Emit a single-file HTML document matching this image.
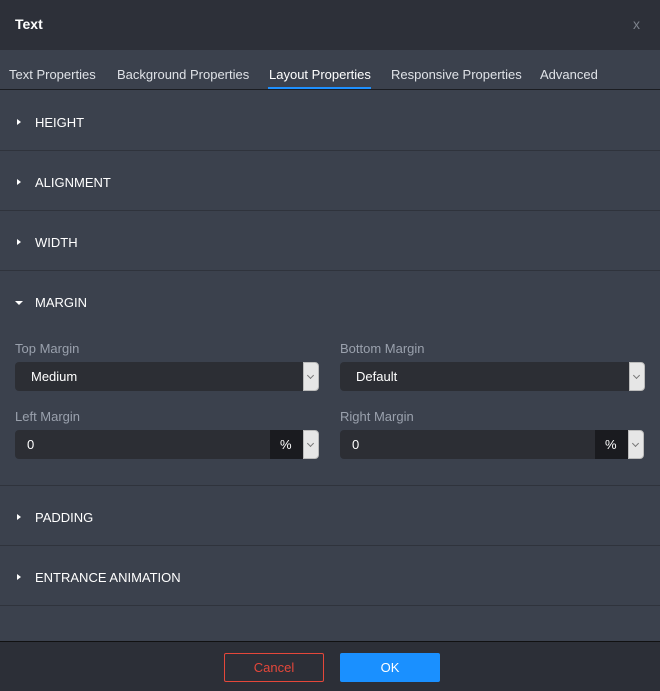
<!DOCTYPE html>
<html><head><style>
*{box-sizing:border-box;margin:0;padding:0}
body{width:660px;height:691px;background:#3b414d;font-family:"Liberation Sans",sans-serif;position:relative;overflow:hidden;color:#fff}
.hdr{position:absolute;left:0;top:0;width:660px;height:50px;background:#2d3039}
.hdr .t{position:absolute;left:15px;top:16px;font-size:14px;font-weight:bold}
.hdr .x{position:absolute;right:20px;top:16px;font-size:14px;color:#7d828c}
.tabs{position:absolute;top:50px;left:0;width:660px;height:40px;border-bottom:1px solid #1b1d22}
.tab{position:absolute;top:17px;font-size:13px;color:#dfe2e7}
.tab.a{color:#fff}
.ul{position:absolute;left:268px;top:87px;width:103px;height:2px;background:#1e90ff}
.sec{position:absolute;left:0;width:660px;border-bottom:1px solid #2f333c}
.sec .h{position:absolute;left:35px;top:24px;font-size:13px;color:#fff}
.tri{position:absolute;left:17px;top:28px;width:0;height:0;border-top:3.5px solid transparent;border-bottom:3.5px solid transparent;border-left:4px solid #fff}
.trid{position:absolute;left:15px;top:30px;width:0;height:0;border-left:4px solid transparent;border-right:4px solid transparent;border-top:4px solid #fff}
.lbl{position:absolute;font-size:13px;color:#9aa1ad}
.inp{position:absolute;height:29px;background:#2c2e34;border-radius:4px;font-size:13px;color:#fff;padding:7px 0 0 16px}
.chev{position:absolute;right:0;top:0;width:16px;height:29px;background:#e6e6e6;border-radius:0 4px 4px 0;border:1px solid #bbb}
.chev:after{content:"";position:absolute;left:4px;top:10px;width:4px;height:4px;border-right:1px solid #777;border-bottom:1px solid #777;transform:rotate(45deg)}
.pct{position:absolute;right:16px;top:0;width:33px;height:29px;background:#1a1b1f;font-size:13px;padding:7px 0 0 10px}
.ftr{position:absolute;left:0;top:641px;width:660px;height:50px;background:#2c2f37;border-top:1px solid #111}
.btn{position:absolute;top:11px;height:29px;width:100px;border-radius:2px;font-size:13px;text-align:center;line-height:27px}
</style></head><body>
<div class="hdr"><div class="t">Text</div><div class="x">x</div></div>
<div class="tabs">
<div class="tab" style="left:9px">Text Properties</div>
<div class="tab" style="left:117px">Background Properties</div>
<div class="tab a" style="left:269px">Layout Properties</div>
<div class="tab" style="left:391px">Responsive Properties</div>
<div class="tab" style="left:540px">Advanced</div>
</div>
<div class="ul"></div>
<div class="sec" style="top:91px;height:60px"><div class="tri"></div><div class="h">HEIGHT</div></div>
<div class="sec" style="top:151px;height:60px"><div class="tri"></div><div class="h">ALIGNMENT</div></div>
<div class="sec" style="top:211px;height:60px"><div class="tri"></div><div class="h">WIDTH</div></div>
<div class="sec" style="top:271px;height:215px"><div class="trid"></div><div class="h">MARGIN</div>
<div class="lbl" style="left:15px;top:70px">Top Margin</div>
<div class="lbl" style="left:340px;top:70px">Bottom Margin</div>
<div class="inp" style="left:15px;top:91px;width:304px">Medium<div class="chev"></div></div>
<div class="inp" style="left:340px;top:91px;width:305px">Default<div class="chev"></div></div>
<div class="lbl" style="left:15px;top:138px">Left Margin</div>
<div class="lbl" style="left:340px;top:138px">Right Margin</div>
<div class="inp" style="left:15px;top:159px;width:304px;padding-left:12px">0<div class="pct">%</div><div class="chev"></div></div>
<div class="inp" style="left:340px;top:159px;width:304px;padding-left:12px">0<div class="pct">%</div><div class="chev"></div></div>
</div>
<div class="sec" style="top:486px;height:60px"><div class="tri"></div><div class="h">PADDING</div></div>
<div class="sec" style="top:546px;height:60px"><div class="tri"></div><div class="h">ENTRANCE ANIMATION</div></div>
<div class="ftr">
<div class="btn" style="left:224px;border:1px solid #e4473a;color:#e4473a">Cancel</div>
<div class="btn" style="left:340px;background:#1a90ff;color:#fff;line-height:29px">OK</div>
</div>
</body></html>
